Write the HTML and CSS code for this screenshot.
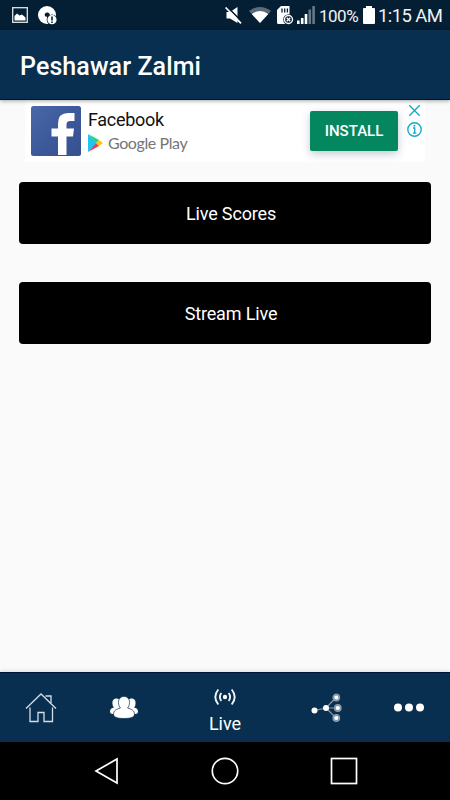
FILE: index.html
```html
<!DOCTYPE html>
<html lang="en">
<head>
    <meta charset="UTF-8">
    <meta name="viewport" content="width=device-width, initial-scale=1.0">
    <title>Peshawar Zalmi</title>
    <link rel="stylesheet" href="styles.css">
</head>
<body>

<div class="screen">
    <!-- Status bar -->
    <div class="status-bar">
        <svg class="icon-picture" width="16" height="16" viewBox="0 0 16 16">
            <rect x="0.7" y="0.7" width="14.6" height="14.6" fill="none" stroke="#dfe5ea" stroke-width="1.3"/>
            <path d="M2.5 13.5V9L5 6.500l2.500 2L10 7.500l3.500 3v3z" fill="#fff"/>
        </svg>
        <svg class="icon-app" width="20" height="19" viewBox="0 0 20 19">
            <circle cx="9" cy="9" r="9" fill="#fff"/>
            <path d="M6.6 9a2.6 2.6 0 1 1 5 1l-1.6 3-1-2.2-1.6-.2z" fill="#041e33"/>
            <circle cx="14" cy="13.7" r="5.3" fill="#041e33"/>
            <circle cx="14" cy="13.7" r="4.6" fill="#fff"/>
            <path d="M14 10.6v3.8M14 15.4v1.6" stroke="#041e33" stroke-width="1.6"/>
        </svg>
        <div class="status-right">
            <svg class="icon-mute" width="17" height="17" viewBox="0 0 17 17">
                <path d="M1.500 5H5l7.500-5v16L5 11.500H1.500z" fill="#fff"/>
                <path d="M2.300 0L17 14.700" stroke="#041e33" stroke-width="1.600"/>
                <path d="M.6 .5L16 16.400" stroke="#fff" stroke-width="1.700"/>
            </svg>
            <svg class="icon-wifi" width="22" height="16" viewBox="0 0 22 16">
                <path d="M0 4Q11-4 22 4L11 16z" fill="#5a6c7b"/>
                <path d="M2.700 7Q11 1 19.300 7L11 16z" fill="#fff"/>
            </svg>
            <svg class="icon-sd" width="17" height="19" viewBox="0 0 17 19">
                <path d="M4 0h8.500v18H1.500Q0 18 0 16.500V4z" fill="#fff"/>
                <path d="M5 2.500v4M7.700 2.500v4M10.400 2.500v4" stroke="#041e33" stroke-width="1.300"/>
                <circle cx="11.500" cy="13.500" r="5.300" fill="#041e33"/>
                <circle cx="11.500" cy="13.500" r="4" fill="#041e33" stroke="#fff" stroke-width="1.400"/>
                <path d="M9.700 11.700l3.600 3.600M13.300 11.700l-3.600 3.600" stroke="#fff" stroke-width="1.300"/>
            </svg>
            <svg class="icon-signal" width="18" height="18" viewBox="0 0 18 18">
                <path d="M0 14.500h2.600V18H0zM3.900 12h2.600v6H3.900zM7.700 8h2.600v10H7.700z" fill="#fff"/>
                <path d="M11.500 3.500h2.600V18h-2.600zM15.300 0h2.600v18h-2.600z" fill="#64788a"/>
            </svg>
            <span class="battery-text">100%</span>
            <svg class="icon-battery" width="12" height="18" viewBox="0 0 12 18">
                <path d="M3 0h6v2h2q1 0 1 1v14q0 1-1 1H1q-1 0-1-1V3q0-1 1-1h2z" fill="#fff"/>
            </svg>
            <span class="clock">1:15 AM</span>
        </div>
    </div>

    <header class="header">
        <h1>Peshawar Zalmi</h1>
    </header>

    <main class="content">
        <!-- Ad -->
        <div class="ad">
            <svg class="ad-logo" width="50" height="50" viewBox="0 0 50 50">
                <defs>
                    <linearGradient id="fb" x1="0" y1="0" x2="1" y2="1">
                        <stop offset="0" stop-color="#4b67a6"/>
                        <stop offset="0.5" stop-color="#3c599b"/>
                        <stop offset="1" stop-color="#36518f"/>
                    </linearGradient>
                </defs>
                <rect width="50" height="50" rx="2.5" fill="url(#fb)"/>
                <path d="M27 49V30.500h-6.500v-8H27v-4.800Q27 7 37 7h6.500v8H39q-3.500 0-3.500 3.500v4H43l-1 8h-6.500V49z" fill="#fff"/>
            </svg>
            <div class="ad-info">
                <div class="ad-title">Facebook</div>
                <div class="ad-store">
                    <svg width="15" height="18" viewBox="0 0 15 18">
                        <path d="M0 0v18l8.500-9z" fill="#20c4f4"/>
                        <path d="M0 0l11 6-2.800 3z" fill="#20d67b"/>
                        <path d="M0 18l11-6-2.800-3z" fill="#ee3a4c"/>
                        <path d="M11 6l4 3-4 3-2.800-3z" fill="#fdc50c"/>
                    </svg>
                    <span>Google Play</span>
                </div>
            </div>
            <button class="install-button">INSTALL</button>
            <svg class="ad-controls" width="16" height="34" viewBox="0 0 16 34">
                <path d="M2.300 1.300l10.400 10.400M12.700 1.300L2.300 11.700" stroke="#17a9c9" stroke-width="1.400"/>
                <circle cx="7.500" cy="25.500" r="6.700" fill="none" stroke="#17a9c9" stroke-width="1.400"/>
                <path d="M6 24h1.700v5M5.800 29.100h3.600" fill="none" stroke="#17a9c9" stroke-width="1.400"/>
                <circle cx="7.400" cy="21.800" r="1" fill="#17a9c9"/>
            </svg>
        </div>

        <button class="main-button">Live Scores</button>
        <button class="main-button">Stream Live</button>
    </main>

    <!-- Tabs -->
    <nav class="tabs">
        <div class="tab">
            <svg class="icon-home" width="32" height="32" viewBox="0 0 32 32" fill="none" stroke="#d5dde4" stroke-width="1.300">
                <path d="M1 16.500L16 2 31 16.500"/>
                <path d="M20.500 4H26v7"/>
                <path d="M5 15.500v14h8v-9h6v9h8.500v-14"/>
            </svg>
        </div>
        <div class="tab">
            <svg class="icon-people" width="28" height="23" viewBox="0 0 28 23" fill="#fff">
                <path d="M2.500 8C1.500 1 10 1 11 6l1 12H3Q0 18 0 15.500C0 13 1.500 12 4 11.500Q2.500 10.500 2.500 8z"/>
                <path d="M25.500 8C26.500 1 18 1 17 6l-1 12h9q3 0 3-2.500c0-2.500-1.500-3.500-4-4Q25.500 10.500 25.500 8z"/>
                <path d="M8.500 6.500C8-1.500 20-1.500 19.500 6.500c0 2.500-.8 4.500-2 5.500 4 1 7 2.500 7 6.500q0 4-10.500 4t-10.500-4c0-4 3-5.500 7-6.500-1.200-1-2-3-2-5.500z" stroke="#082f50" stroke-width=".7"/>
            </svg>
        </div>
        <div class="tab tab-live">
            <svg width="22" height="18" viewBox="0 0 22 18" fill="none" stroke="#eef2f5" stroke-width="1.900">
                <circle cx="11" cy="9" r="2.200" fill="#fff" stroke="none"/>
                <path d="M7.300 5Q4.500 9 7.300 13M14.700 5Q17.500 9 14.700 13"/>
                <path d="M4.300 1.500Q-1.700 9 4.300 16.500M17.700 1.500Q23.700 9 17.700 16.500"/>
            </svg>
            <span>Live</span>
        </div>
        <div class="tab">
            <svg class="icon-share" width="32" height="30" viewBox="0 0 32 30">
                <path d="M3.500 17.500L15 15l10-10.500M15 15h12M15 15l10 10" fill="none" stroke="#8799a8" stroke-width="1.200"/>
                <circle cx="3.500" cy="17.500" r="3" fill="#fff"/>
                <circle cx="15" cy="15" r="3" fill="#fff"/>
                <g fill="#fff" stroke="#8799a8" stroke-width="1.800">
                    <circle cx="25.300" cy="4.500" r="3"/>
                    <circle cx="26.800" cy="15" r="3"/>
                    <circle cx="25.300" cy="25" r="3"/>
                </g>
            </svg>
        </div>
        <div class="tab">
            <svg class="icon-more" width="32" height="9" viewBox="0 0 32 9" fill="#fff">
                <circle cx="5" cy="4.500" r="4"/>
                <circle cx="16" cy="4.500" r="4"/>
                <circle cx="27" cy="4.500" r="4"/>
            </svg>
        </div>
    </nav>

    <!-- System buttons -->
    <div class="system-bar">
        <svg width="28" height="28" viewBox="0 0 28 28"><path d="M4 14L25 2v24z"/></svg>
        <svg width="28" height="28" viewBox="0 0 28 28"><circle cx="14" cy="14" r="12.700"/></svg>
        <svg width="28" height="28" viewBox="0 0 28 28"><rect x="1.500" y="1.500" width="25" height="25"/></svg>
    </div>
</div>

</body>
</html>
```

FILE: styles.css
```css
* {
    box-sizing: border-box;
}
body {
    margin: 0;
    font-family: Roboto, sans-serif;
    background-color: #fafafa;
}
svg {
    display: block;
    flex-shrink: 0;
}
button {
    border: none;
    padding: 0;
    font-family: inherit;
    color: white;
}
.screen {
    width: 450px;
    height: 800px;
    display: flex;
    flex-direction: column;
    overflow: hidden;
}
.status-bar {
    height: 30px;
    padding: 0 8px 0 12px;
    display: flex;
    align-items: center;
    background-color: #041e33;
    color: #f0f3f5;
}
.icon-app {
    margin-left: 10px;
}
.status-right {
    margin-left: auto;
    display: flex;
    align-items: center;
}
.icon-wifi {
    margin-left: 7px;
}
.icon-sd {
    margin-left: 6px;
}
.icon-signal {
    margin-left: 3px;
}
.battery-text {
    width: 40px;
    margin-left: 4px;
    font-size: 17px;
    line-height: 30px;
    padding-top: 2px;
    letter-spacing: -0.5px;
}
.icon-battery {
    margin-left: 4px;
}
.clock {
    width: 64px;
    margin-left: 3px;
    font-size: 18.5px;
    line-height: 30px;
    padding-top: 2px;
    letter-spacing: -0.6px;
    white-space: nowrap;
}
.header {
    height: 70px;
    padding: 4px 20px 0;
    display: flex;
    align-items: center;
    background-color: #082f50;
    border-bottom: 1px solid #00133a;
    box-shadow: 0 1px 4px rgba(0, 0, 0, 0.35);
    position: relative;
    z-index: 1;
}
.header h1 {
    margin: 0;
    font-size: 25px;
    font-weight: 500;
    letter-spacing: 0.1px;
    color: white;
}
.content {
    flex: 1;
    display: flex;
    flex-direction: column;
    align-items: center;
}
.ad {
    width: 400px;
    height: 62px;
    padding: 0 2px 0 6px;
    display: flex;
    background-color: white;
}
.ad-logo {
    margin-top: 6px;
}
.ad-info {
    padding: 9px 0 0 7px;
    flex: 1;
}
.ad-title {
    font-size: 18px;
    line-height: 22px;
    letter-spacing: -0.3px;
    color: #111;
}
.ad-store {
    display: flex;
    align-items: center;
    gap: 5px;
    margin-top: 3px;
    color: #757575;
    font-family: Lato, sans-serif;
    font-size: 16px;
    line-height: 18px;
    letter-spacing: -0.4px;
    white-space: nowrap;
}
.install-button {
    width: 88px;
    height: 40px;
    margin-top: 11px;
    background-color: #04875f;
    border-radius: 2px;
    box-shadow: 0 3px 8px rgba(60, 80, 110, 0.3);
    font-size: 15px;
    font-weight: 500;
}
.ad-controls {
    margin: 4px 0 0 9px;
}
.main-button {
    width: 412px;
    height: 62px;
    margin-top: 19.5px;
    padding: 2px 0 0 12px;
    background-color: black;
    border-radius: 4px;
    font-size: 18px;
    letter-spacing: -0.15px;
}
.main-button + .main-button {
    margin-top: 38px;
}
.tabs {
    height: 70px;
    display: flex;
    background-color: #082f50;
    border-top: 1px solid #00133a;
    box-shadow: 0 -1px 4px rgba(0, 0, 0, 0.12);
}
.tab {
    flex: 1;
    display: flex;
    align-items: center;
    justify-content: center;
}
.icon-home {
    margin-right: 8px;
}
.icon-people {
    margin-right: 22px;
}
.icon-share {
    margin-left: 23px;
}
.icon-more {
    margin-left: 8px;
}
.tab-live {
    flex-direction: column;
    justify-content: flex-start;
    padding-top: 15px;
    color: white;
    font-size: 18px;
    line-height: 22px;
}
.tab-live span {
    margin-top: 7px;
}
.system-bar {
    height: 58px;
    padding: 0 92px;
    display: flex;
    align-items: center;
    justify-content: space-between;
    background-color: black;
}
.system-bar svg {
    fill: none;
    stroke: white;
    stroke-width: 1.7;
}
```
